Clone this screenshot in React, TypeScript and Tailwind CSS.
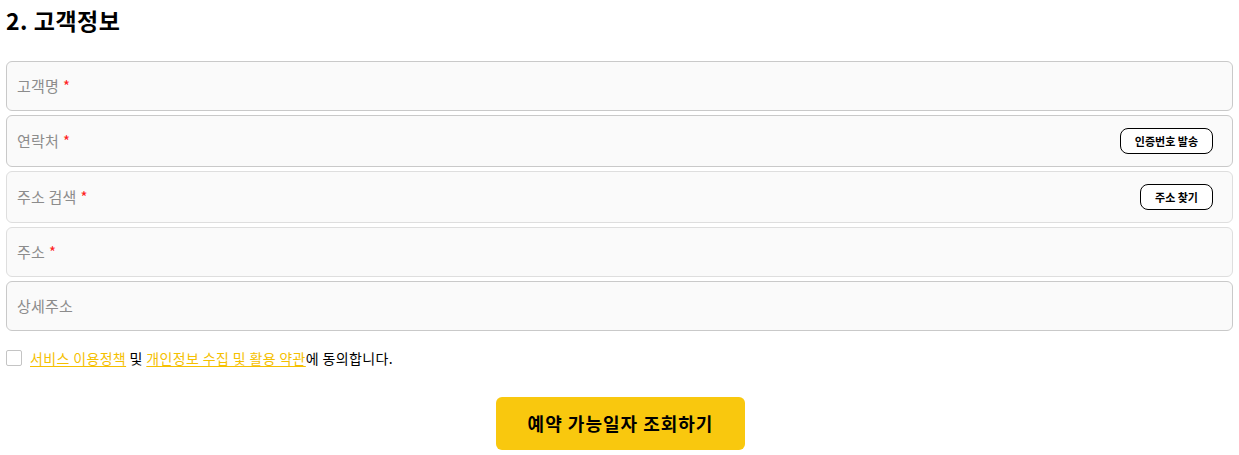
import React, { useState } from 'react'

const font = { fontFamily: '"Noto Sans CJK KR", "Noto Sans", sans-serif' }

type FieldProps = {
  label: string
  required?: boolean
  button?: string
  tall?: boolean
  dark?: boolean
}

function Field({ label, required, button, tall, dark }: FieldProps) {
  return (
    <div
      className={`flex items-center justify-between rounded-[6px] border bg-[#fafafa] pl-[10px] pr-[19px] ${
        tall ? 'h-[52px]' : 'h-[50px]'
      } ${dark ? 'border-[#c9c9c9]' : 'border-[#dedede]'}`}
    >
      <span className="text-[15px] tracking-[0.2px] text-[#8c8c8c]">
        {label}
        {required && <span className="ml-[4px] text-[#ff2020]">*</span>}
      </span>
      {button && (
        <button className="h-[26px] rounded-[8px] border border-black bg-white px-[14px] text-[11px] font-bold text-black">
          {button}
        </button>
      )}
    </div>
  )
}

export default function App() {
  const [agree, setAgree] = useState(false)

  return (
    <div className="w-full bg-white px-[6px] pt-[4px] text-black" style={font}>
      <h2 className="text-[23px] font-bold leading-[32px] tracking-[0.5px]">2. 고객정보</h2>

      <div className="mt-[25px] flex flex-col gap-[4px]">
        <Field label="고객명" required dark />
        <Field label="연락처" required button="인증번호 발송" tall dark />
        <Field label="주소 검색" required button="주소 찾기" tall />
        <Field label="주소" required />
        <Field label="상세주소" dark />
      </div>

      {/* Agreement */}
      <label className="mt-[17px] flex h-[20px] items-center gap-[8px] text-[14px] leading-[20px] tracking-[0.35px]">
        <input
          type="checkbox"
          checked={agree}
          onChange={(e) => setAgree(e.target.checked)}
          className="h-[16px] w-[16px] appearance-none rounded-[2px] border border-[#c4c4c4] bg-white"
        />
        <span>
          <a className="text-[#f5c000] underline underline-offset-2">서비스 이용정책</a> 및{' '}
          <a className="text-[#f5c000] underline underline-offset-2">개인정보 수집 및 활용 약관</a>에 동의합니다.
        </span>
      </label>

      <div className="mt-[29px] flex justify-center pl-[2px]">
        <button className="h-[53px] w-[249px] rounded-[6px] bg-[#f9c80e] text-[18px] font-bold tracking-[1px] text-black">
          예약 가능일자 조회하기
        </button>
      </div>
    </div>
  )
}
